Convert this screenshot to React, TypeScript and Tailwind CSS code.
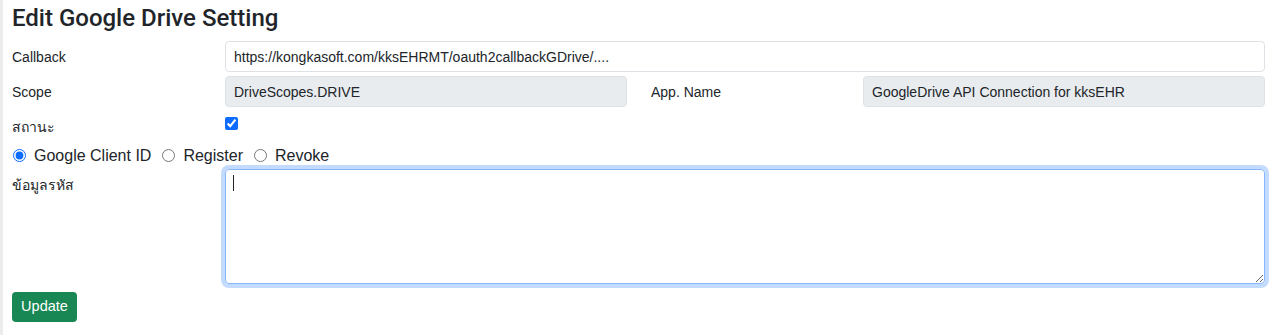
import React from 'react';

const FONT = "font-['Liberation_Sans','Noto_Sans',Arial,sans-serif]";

interface RowLabelProps {
    children: React.ReactNode;
    className?: string;
}

function RowLabel({ children, className }: RowLabelProps) {
    return (
        <label className={"shrink-0 pt-[6px] text-sm leading-[21px] " + (className || "w-[213px]")}>
            {children}
        </label>
    );
}

const inputBase =
    "h-[31px] rounded-[4px] border border-[#dee2e6] px-2 pt-[1px] text-sm leading-[21px] text-[#212529] outline-none";

const App: React.FC = () => {
    const [mode, setMode] = React.useState("client");
    const [active, setActive] = React.useState(true);

    return (
        <div className={"min-h-[335px] border-l-[3px] border-[#ececec] bg-white pl-[9px] pr-[10px] text-[#212529] " + FONT}>
            <h4 className="pt-[4px] mb-[8px] font-['Roboto',Arial,sans-serif] text-[24px] leading-[1.2] font-medium">
                Edit Google Drive Setting
            </h4>

            <div className="flex mb-1">
                <RowLabel>Callback</RowLabel>
                <input
                    readOnly
                    className={inputBase + " flex-1 bg-white"}
                    defaultValue="https://kongkasoft.com/kksEHRMT/oauth2callbackGDrive/...."
                />
            </div>

            <div className="flex mb-1">
                <RowLabel>Scope</RowLabel>
                <input
                    disabled
                    className={inputBase + " w-[402px] bg-[#e9ecef]"}
                    defaultValue="DriveScopes.DRIVE"
                />
                <RowLabel className="ml-[24px] w-[212px]">App. Name</RowLabel>
                <input
                    disabled
                    className={inputBase + " w-[402px] bg-[#e9ecef]"}
                    defaultValue="GoogleDrive API Connection for kksEHR"
                />
            </div>

            <div className="flex h-[31px]">
                <RowLabel>สถานะ</RowLabel>
                <div className="pt-[6px]">
                    <input
                        type="checkbox"
                        checked={active}
                        onChange={() => setActive(!active)}
                        className="m-0 block h-[13px] w-[13px] accent-[#0b6cff]"
                    />
                </div>
            </div>

            <div className="mt-[2px] flex h-[24px] items-center text-base">
                {[
                    { key: "client", name: "Google Client ID" },
                    { key: "register", name: "Register" },
                    { key: "revoke", name: "Revoke" },
                ].map(({ key, name }) => (
                    <label key={key} className="ml-[1px] mr-[10px] flex items-center gap-2">
                        <input
                            type="radio"
                            name="mode"
                            checked={mode === key}
                            onChange={() => setMode(key)}
                            className="m-0 block h-[13px] w-[13px] accent-[#0b6cff]"
                        />
                        {name}
                    </label>
                ))}
            </div>

            <div className="mt-[1px] flex">
                <RowLabel>ข้อมูลรหัส</RowLabel>
                <div className="relative flex-1">
                    <textarea
                        className="block h-[115px] w-full resize-y rounded-[4px] border border-[#86b7fe] px-2 py-1 text-sm outline-none shadow-[0_0_0_4px_rgba(13,110,253,0.25)]"
                    />
                    <span className="absolute left-[8px] top-[6px] h-[16px] w-px bg-[#212529]" />
                </div>
            </div>

            <button className="mt-[8px] h-[30px] w-[65px] rounded-[4px] bg-[#198754] text-[14.5px] text-white">
                Update
            </button>
        </div>
    );
};

export default App;
